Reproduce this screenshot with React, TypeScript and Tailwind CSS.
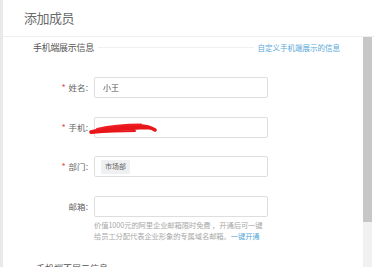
const cjk = { fontFamily: '"Noto Sans CJK SC", "Noto Sans", sans-serif' };

function Row({
  label,
  required,
  children,
  className = '',
}: {
  label: string;
  required?: boolean;
  children?: React.ReactNode;
  className?: string;
}) {
  return (
    <div className={`flex items-center ${className}`}>
      <div className="w-[61px] pr-[6px] flex items-center justify-end text-[8.5px] text-[#666]">
        {required && <span className="text-[#e0504a] mr-[3px] text-[9px]">*</span>}
        <span>{label}:</span>
      </div>
      <div className="relative w-[174px] h-[21px] border border-[#dedede] rounded-[2px] bg-white flex items-center px-[6px]">
        {children}
      </div>
    </div>
  );
}

export default function App() {
  return (
    <div className="w-[374px] h-[280px] bg-white overflow-hidden" style={cjk}>
      <div className="h-[267px] flex overflow-hidden">
        <div className="w-[3px] bg-[#e9e9e9]" />
        <div className="flex-1 flex flex-col">
          <div className="h-[37px] border-b border-[#efefef] flex items-center pl-[21px]">
            <span className="text-[13px] text-[#6a6a6a] tracking-[-0.5px]">添加成员</span>
          </div>
          <div className="flex flex-1 overflow-hidden">
            <div className="flex-1 pl-[30px]">
              {/* section header */}
              <div className="mt-[5px] h-[11px] flex items-center pr-[23px]">
                <span className="text-[9px] text-[#555] tracking-[-0.3px]">手机端展示信息</span>
                <div className="flex-1 h-px bg-[#f0f0f0] mx-[4px]" />
                <span className="text-[7.5px] text-[#5aaad8]">自定义手机端展示的信息</span>
              </div>

              <div className="mt-[24px]">
                <Row label="姓名" required>
                  <span className="text-[8px] text-[#555] pl-[2px]">小王</span>
                </Row>
                <Row label="手机" required className="mt-[19px]">
                  <svg
                    className="absolute left-[-6px] top-[3px]"
                    width="68"
                    height="14"
                    viewBox="0 0 68 14"
                    fill="none"
                  >
                    <path
                      d="M1 11 C 8 7, 20 5, 32 4.5 C 44 4, 56 4.5, 66 9 C 56 8, 44 9, 30 10 C 18 11, 8 12, 1 11 Z"
                      fill="#e8161b"
                    />
                    <path
                      d="M2 11 C 14 8, 34 5, 50 5 C 58 5, 63 7, 66 9"
                      stroke="#e8161b"
                      strokeWidth="3.5"
                      strokeLinecap="round"
                    />
                    <path
                      d="M8 8 C 20 5, 36 3.5, 52 3.5"
                      stroke="#ee2024"
                      strokeWidth="2"
                      strokeLinecap="round"
                    />
                    <path
                      d="M2 12 C 14 11, 30 10, 46 10"
                      stroke="#e8161b"
                      strokeWidth="2"
                      strokeLinecap="round"
                    />
                  </svg>
                </Row>
                <Row label="部门" required className="mt-[18px]">
                  <span className="bg-[#eef0f2] text-[7px] text-[#666] px-[4px] h-[14px] flex items-center rounded-[1px]">
                    市场部
                  </span>
                </Row>
                <Row label="邮箱" className="mt-[19px]" />
                <div className="ml-[61px] mt-[3px] text-[7.3px] leading-[11px] text-[#a8a8a8] tracking-[-0.1px]">
                  <div>价值1000元的阿里企业邮箱限时免费 ，开通后可一键</div>
                  <div>
                    给员工分配代表企业形象的专属域名邮箱。
                    <span className="text-[#5aaad8]">一键开通</span>
                  </div>
                </div>
                <div className="mt-[20px] text-[9px] text-[#555] pl-[3px]">手机端不展示信息</div>
              </div>
            </div>
            <div className="w-[9px] flex flex-col">
              <div className="h-[185px] bg-[#c7c7c7]" />
              <div className="flex-1 bg-[#f1f1f1]" />
            </div>
            <div className="w-[2px]" />
          </div>
        </div>
      </div>
    </div>
  );
}
